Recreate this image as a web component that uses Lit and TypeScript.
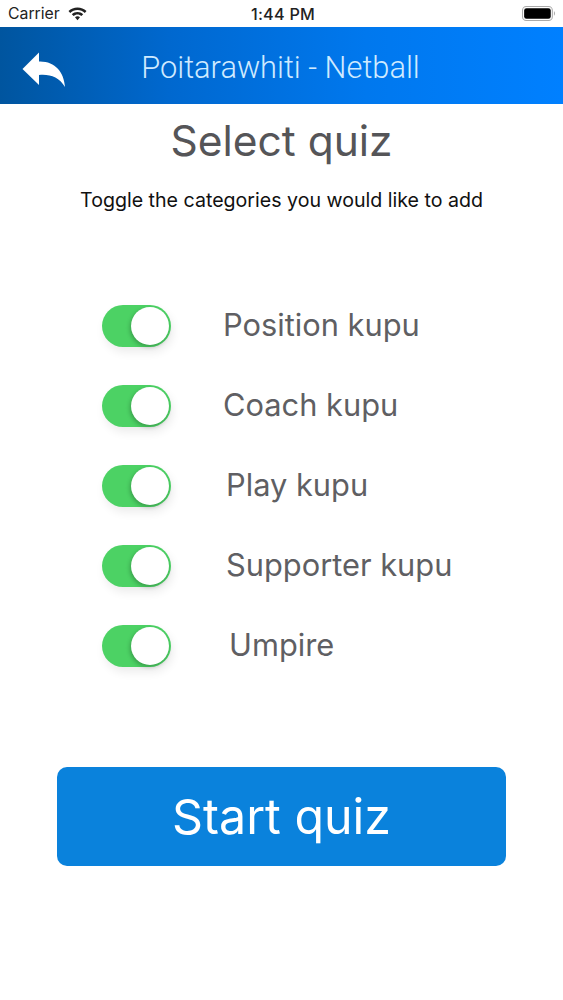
import { LitElement, html, css } from "lit";
import { customElement } from "lit/decorators.js";

const rows = [
  { label: "Position kupu", gap: 52 },
  { label: "Coach kupu", gap: 52 },
  { label: "Play kupu", gap: 55 },
  { label: "Supporter kupu", gap: 55 },
  { label: "Umpire", gap: 58 },
];

@customElement("app-root")
export class AppRoot extends LitElement {
  static styles = css`
    :host { display: block; width: 563px; height: 1000px; background: #fff; font-family: Inter, "Liberation Sans", sans-serif; overflow: hidden; }
    .status { height: 27px; display: grid; grid-template-columns: 1fr auto 1fr; align-items: center; padding: 0 8px 0 8px; box-sizing: border-box; color: #222; font-size: 15.800px; }
    .left { display: flex; align-items: center; gap: 8px; }
    .time { font-weight: 500; font-size: 16.200px; letter-spacing: .25px; padding-left: 3px; }
    .right { display: flex; justify-content: flex-end; }
    .right svg { width: 33px; height: 15px; }
    .header { height: 77px; background: linear-gradient(90deg, #00559f 0%, #0068cf 30%, #0078ee 65%, #0080ff 100%); display: flex; align-items: center; padding-left: 22px; position: relative; box-sizing: border-box; }
    .back { margin-top: 9px; }
    .header-title { position: absolute; inset: 0; display: flex; align-items: center; justify-content: center; color: #cfeaff; font: 300 30.800px Roboto, sans-serif; padding: 3px 2px 0 0; box-sizing: border-box; }
    .title { margin: 10px 0 0; height: 54px; line-height: 54px; text-align: center; font-size: 42.500px; font-weight: 400; color: #555558; }
    .sub { margin-top: 20px; text-align: center; font-size: 19.600px; line-height: 24px; color: #111; }
    .list { margin-top: 93px; padding-left: 102px; display: flex; flex-direction: column; gap: 38px; }
    .row { display: flex; align-items: center; height: 42px; }
    .toggle { width: 69px; height: 42px; border-radius: 21px; background: #4cd264; position: relative; flex: none; box-shadow: 2px 5px 10px rgba(0,0,0,.08); }
    .knob { position: absolute; right: 2px; top: 2px; width: 38px; height: 38px; border-radius: 50%; background: #fff; box-shadow: -1px 2px 4px rgba(0,0,0,.25); }
    .label { font-size: 30.800px; font-weight: 400; color: #5f5f63; line-height: 40px; margin-top: -2px; }
    .btn { margin: 100px 0 0 57px; width: 449px; height: 99px; border-radius: 10px; background: #0a82dc; color: #fff; font-size: 48.300px; font-weight: 400; display: flex; align-items: center; justify-content: center; }
  `;

  render() {
    return html`
      <div class="status">
        <div class="left">
          <span>Carrier</span>
          <svg width="19" height="14" viewBox="0 0 19 14" fill="#222">
            <path d="M9.5 0.5C6 0.5 2.9 1.9 0.5 4.1L2.2 5.9C4.1 4.1 6.7 3 9.5 3s5.4 1.1 7.3 2.9l1.7-1.8C16.100 1.900 13 .5 9.500.5z"/>
            <path d="M9.5 5C7.300 5 5.300 5.900 3.800 7.300l1.800 1.800C6.600 8.100 8 7.500 9.500 7.500s2.900.6 3.900 1.600l1.800-1.800C13.700 5.900 11.700 5 9.500 5z"/>
            <path d="M9.500 9.300c-1 0-1.900.4-2.500 1l2.500 2.900 2.500-2.900c-.6-.6-1.500-1-2.500-1z"/>
          </svg>
        </div>
        <span class="time">1:44 PM</span>
        <div class="right">
          <svg viewBox="0 0 31 14">
            <rect x="0.500" y="0.500" width="28" height="13" rx="3.500" fill="none" stroke="#aaa"/>
            <rect x="2" y="2" width="25" height="10" rx="2.200" fill="#000"/>
            <path d="M30 5v4c.6-.3 1-1 1-2s-.4-1.700-1-2z" fill="#aaa"/>
          </svg>
        </div>
      </div>
      <div class="header">
        <svg class="back" width="44" height="36" viewBox="0 0 44 36" fill="#fff">
          <path d="M17 0.500 L0.500 17 L17 33 L17 23 C28 22 37 25 43 35 C42 20 33 9 17 9.500 Z"/>
        </svg>
        <div class="header-title">Poitarawhiti - Netball</div>
      </div>
      <div class="title">Select quiz</div>
      <div class="sub">Toggle the categories you would like to add</div>
      <div class="list">
        ${rows.map(
          (r) => html`<div class="row">
            <div class="toggle"><div class="knob"></div></div>
            <span class="label" style="margin-left:${r.gap}px">${r.label}</span>
          </div>`
        )}
      </div>
      <div class="btn">Start quiz</div>
    `;
  }
}
